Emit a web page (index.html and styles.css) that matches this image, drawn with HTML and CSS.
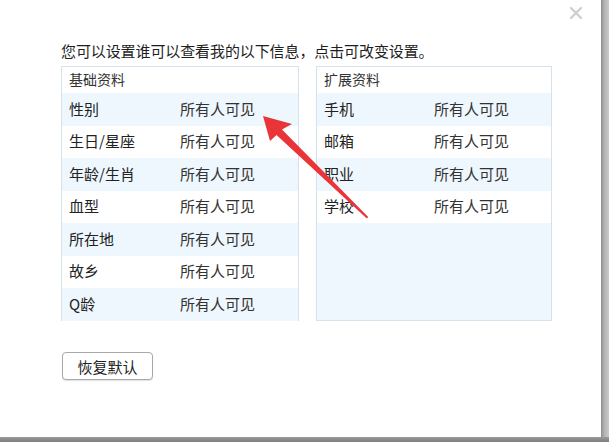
FILE: index.html
```html
<!DOCTYPE html>
<html lang="zh-CN">
<head>
    <meta charset="UTF-8">
    <meta name="viewport" content="width=device-width, initial-scale=1.0">
    <title>隐私设置</title>
    <link rel="stylesheet" href="styles.css">
</head>
<body>
    <div class="screen">
        <div class="dialog">
            <svg class="close" width="14" height="14" viewBox="0 0 14 14">
                <path d="M2 2 L12 12 M12 2 L2 12" stroke="#cfcfcf" stroke-width="2.4" stroke-linecap="round"/>
            </svg>

            <p class="intro">您可以设置谁可以查看我的以下信息，点击可改变设置。</p>

            <div class="panels">
                <div class="panel panel-left">
                    <div class="panel-title">基础资料</div>
                    <div class="row"><span class="label">性别</span><span class="value">所有人可见</span></div>
                    <div class="row"><span class="label">生日/星座</span><span class="value">所有人可见</span></div>
                    <div class="row"><span class="label">年龄/生肖</span><span class="value">所有人可见</span></div>
                    <div class="row"><span class="label">血型</span><span class="value">所有人可见</span></div>
                    <div class="row"><span class="label">所在地</span><span class="value">所有人可见</span></div>
                    <div class="row"><span class="label">故乡</span><span class="value">所有人可见</span></div>
                    <div class="row"><span class="label">Q龄</span><span class="value">所有人可见</span></div>
                </div>

                <div class="panel panel-right">
                    <div class="panel-title">扩展资料</div>
                    <div class="row"><span class="label">手机</span><span class="value">所有人可见</span></div>
                    <div class="row"><span class="label">邮箱</span><span class="value">所有人可见</span></div>
                    <div class="row"><span class="label">职业</span><span class="value">所有人可见</span></div>
                    <div class="row"><span class="label">学校</span><span class="value">所有人可见</span></div>
                </div>
            </div>

            <button class="reset">恢复默认</button>

            <!-- red annotation arrow drawn over the dialog -->
            <svg class="arrow" width="600" height="436" viewBox="0 0 600 436">
                <polygon points="263,116 292,124 282,129.5 368.2,217 366.8,218.6 276.5,135 270,141" fill="#ea3538"/>
            </svg>
        </div>
        <div class="edge-right"></div>
    </div>
    <div class="edge-bottom"></div>
</body>
</html>
```

FILE: styles.css
```css
* {
    margin: 0;
    padding: 0;
    box-sizing: border-box;
    font-family: "Noto Sans CJK SC", "Liberation Sans", sans-serif;
}

body {
    width: 609px;
    height: 442px;
    overflow: hidden;
    background: #ffffff;
}

.screen {
    display: flex;
    height: 437px;
}

.dialog {
    position: relative;
    width: 601px;
    height: 437px;
    background: #ffffff;
    padding: 42px 0 0 61px;
}

.edge-right {
    width: 8px;
    background: linear-gradient(90deg, #8d8d8d, #b3b3b3 40%, #c9c9c9);
}

.edge-bottom {
    height: 5px;
    background: linear-gradient(180deg, #9a9a9a, #7d7d7d);
}

.close {
    position: absolute;
    left: 569px;
    top: 6px;
}

.intro {
    font-size: 15px;
    line-height: 18px;
    color: #1e1e1e;
    letter-spacing: -0.1px;
}

.panels {
    display: flex;
    gap: 17px;
    margin-top: 6px;
}

.panel {
    height: 255px;
    border: 1px solid #d5e1eb;
    background: #eef7fd;
}

.panel-left {
    width: 238px;
}

.panel-right {
    width: 236px;
}

.panel-title {
    height: 26px;
    line-height: 24px;
    padding-left: 7px;
    font-size: 14px;
    color: #333;
    background: #ffffff;
}

.row {
    display: flex;
    align-items: center;
    height: 32.5px;
    padding-left: 7px;
    padding-bottom: 2px;
    font-size: 15px;
    color: #222;
    background: #eef7fd;
}

.row:nth-of-type(odd) {
    background: #ffffff;
}

.label {
    width: 111px;
}

.panel-right .label {
    width: 110px;
}

.value {
    color: #333;
}

.reset {
    display: block;
    width: 91px;
    height: 28px;
    margin-top: 31px;
    margin-left: 1px;
    border: 1px solid #a9a9a9;
    border-radius: 4px;
    background: #ffffff;
    box-shadow: 0 1px 1px rgba(0,0,0,0.12);
    font-size: 15px;
    color: #222;
    cursor: pointer;
}

.arrow {
    position: absolute;
    left: 0;
    top: 0;
    pointer-events: none;
}
```
